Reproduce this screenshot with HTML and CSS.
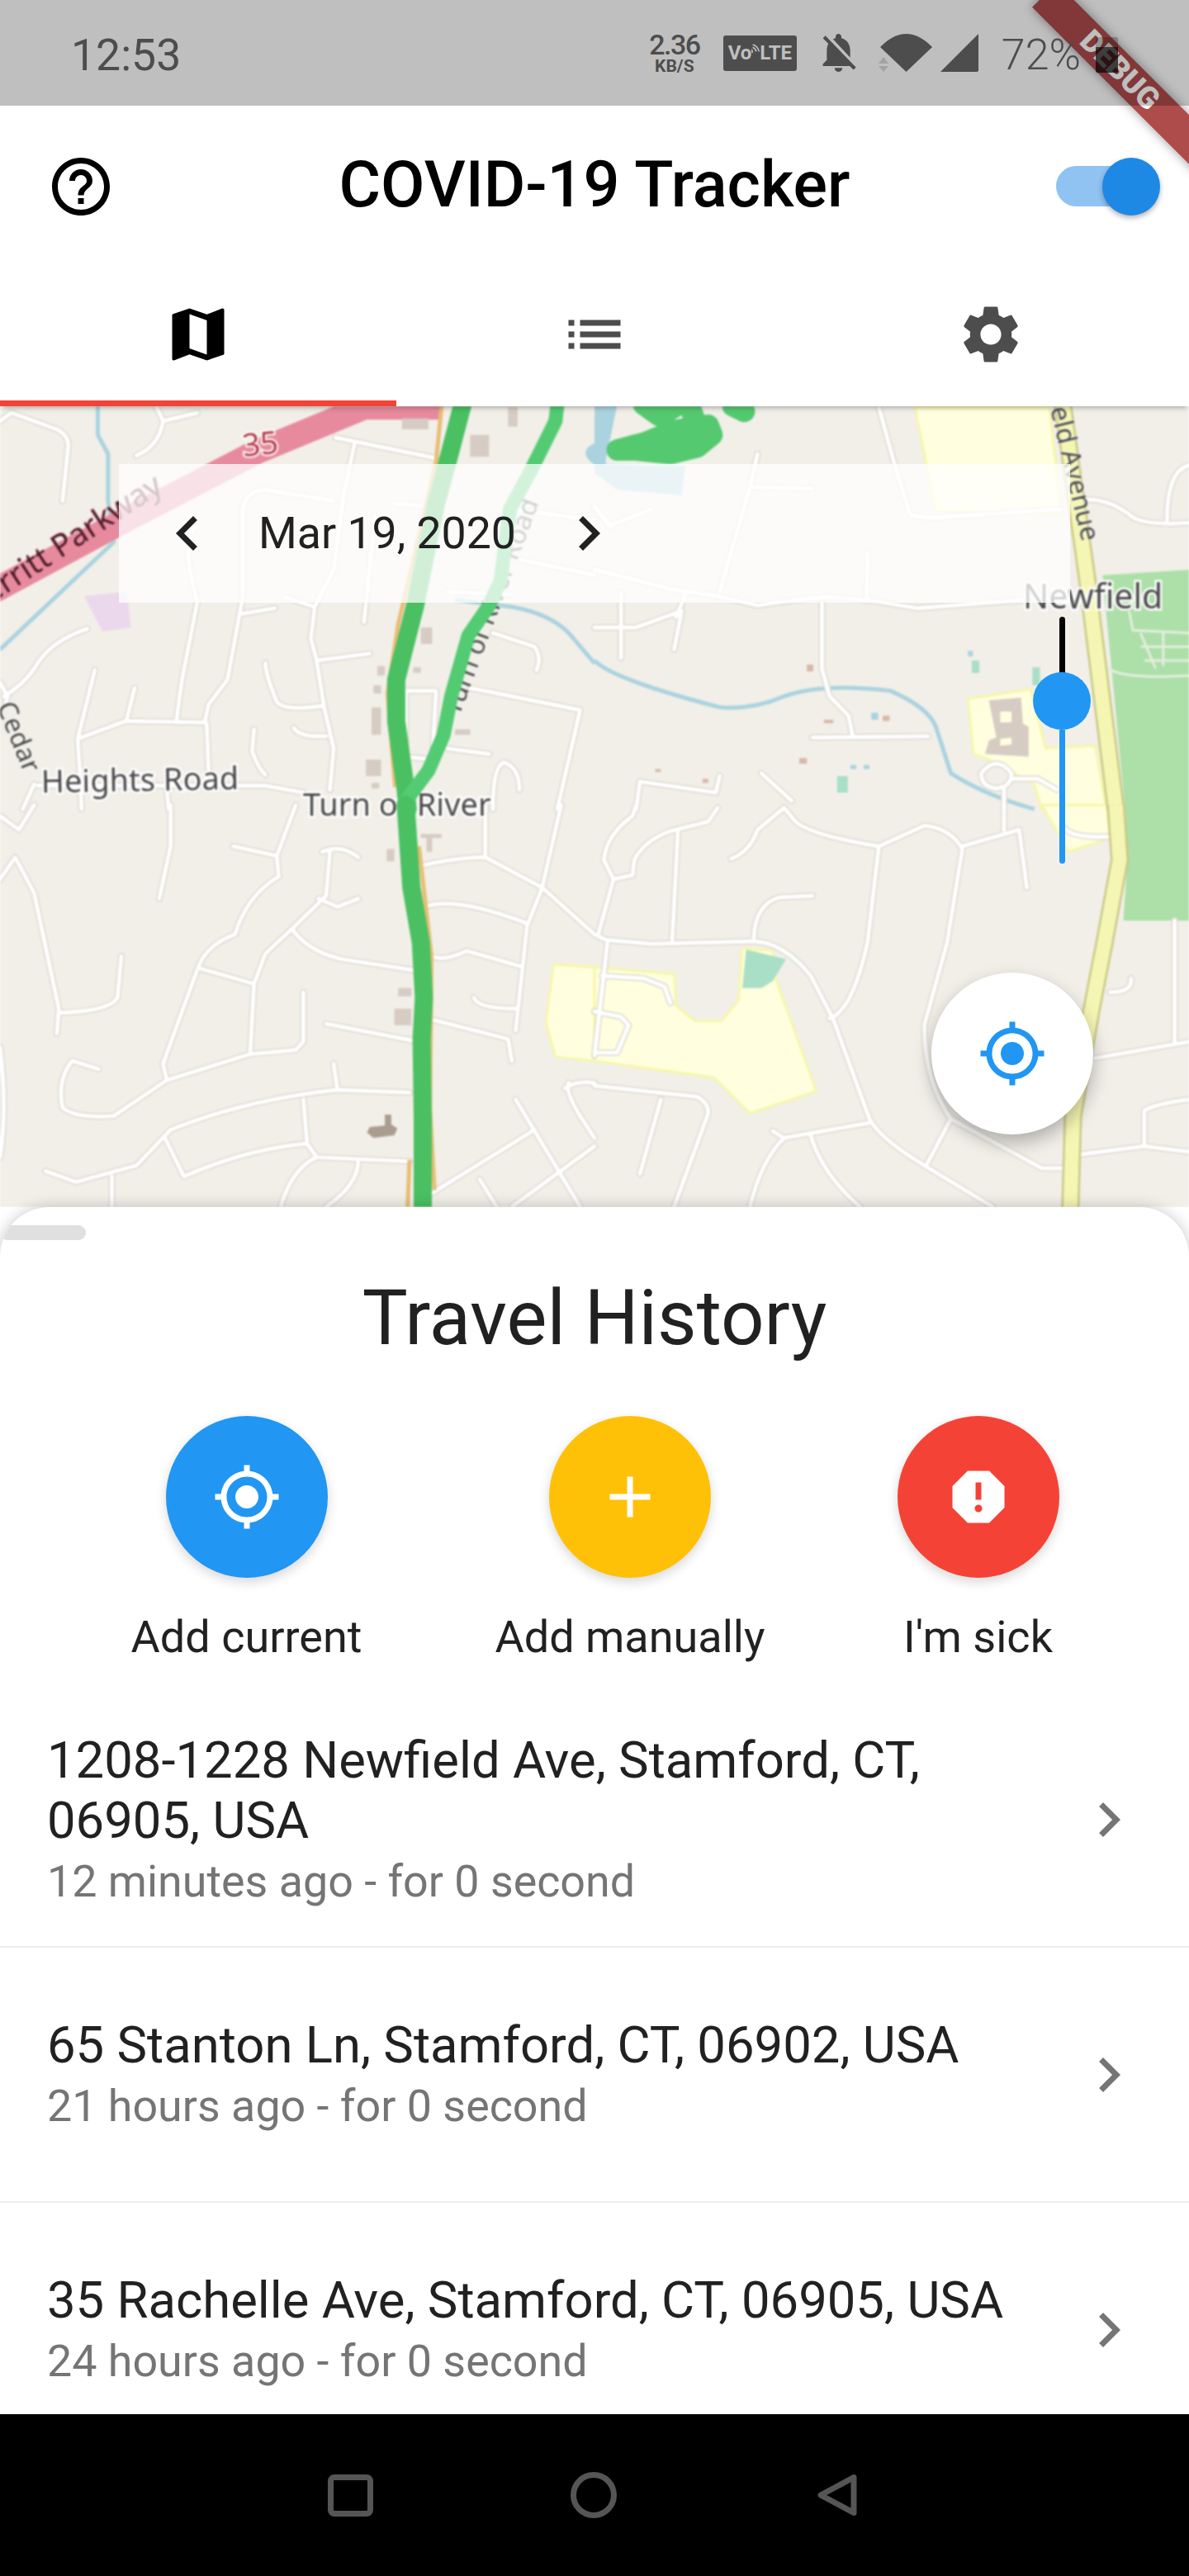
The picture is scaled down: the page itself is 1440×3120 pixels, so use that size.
FILE: index.html
```html
<!DOCTYPE html>
<html lang="en">
<head>
<meta charset="utf-8">
<title>COVID-19 Tracker</title>
<link rel="stylesheet" href="styles.css">
</head>
<body>
<div class="app">
  <div class="status">
    <span class="clock">12:53</span>
    <div class="status-right">
      <div class="speed"><span class="speed-num">2.36</span><span class="speed-unit">KB/S</span></div>
      <div class="volte">Vo<svg class="volte-arcs" viewBox="0 0 12 14" width="10" height="12"><path d="M1 13a5 5 0 0 0-1-5M2 5a9 9 0 0 1 5 6M2 1a13 13 0 0 1 9 10"/></svg>LTE</div>
      <svg class="bell" viewBox="3 2.5 18 19.5" width="47" height="46"><path d="M20 18.69L7.84 6.14 5.27 3.49 4 4.76l2.8 2.8v.01c-.52.99-.8 2.16-.8 3.42v5l-2 2v1h13.73l2 2L21 19.72l-1-1.03zM12 22c1.11 0 2-.89 2-2h-4c0 1.11.89 2 2 2zm6-7.32V11c0-3.08-1.64-5.64-4.5-6.32V4c0-.83-.67-1.5-1.5-1.5s-1.5.67-1.5 1.5v.68c-.15.03-.29.08-.42.12-.1.03-.2.07-.3.11h-.01c-.2.08-.4.17-.59.27-.01 0-.01 0-.02.01L18 14.68z"/></svg>
      <svg class="wifi" viewBox="-2 0 65 46" width="65" height="46"><path d="M31.500 46L0 16Q31.500-16 63 16Z"/><path class="wifi-data" d="M-2 36h12l-6-8zM-2 39h12l-6 7z"/></svg>
      <svg class="signal" viewBox="0 0 46 46" width="46" height="46"><path d="M46 0V44Q46 46 44 46H0Z"/></svg>
      <span class="battery-text">72%</span>
      <div class="battery"></div>
    </div>
  </div>
  <div class="banner"><span>DEBUG</span></div>

  <header class="appbar">
    <svg class="icon icon-black help-icon" viewBox="0 0 24 24"><path d="M11 18h2v-2h-2v2zm1-16C6.480 2 2 6.480 2 12s4.480 10 10 10 10-4.480 10-10S17.520 2 12 2zm0 18c-4.410 0-8-3.590-8-8s3.590-8 8-8 8 3.590 8 8-3.590 8-8 8zm0-14c-2.210 0-4 1.790-4 4h2c0-1.100.9-2 2-2s2 .9 2 2c0 2-3 1.750-3 5h2c0-2.250 3-2.500 3-5 0-2.210-1.790-4-4-4z"/></svg>
    <h1 class="app-title">COVID-19 Tracker</h1>
    <div class="switch"><div class="switch-track"></div><div class="switch-thumb"></div></div>
  </header>

  <nav class="tabs">
    <div class="tab tab-active"><svg class="icon icon-black" viewBox="0 0 24 24"><path d="M20.500 3l-.16.03L15 5.100 9 3 3.360 4.900c-.21.07-.36.25-.36.48V20.500c0 .28.22.5.5.5l.16-.03L9 18.900l6 2.100 5.640-1.900c.21-.07.36-.25.36-.48V3.500c0-.28-.22-.5-.5-.5zM15 19l-6-2.110V5l6 2.110V19z"/></svg></div>
    <div class="tab"><svg class="icon icon-grey" viewBox="0 0 24 24"><path d="M3 13h2v-2H3v2zm0 4h2v-2H3v2zm0-8h2V7H3v2zm4 4h14v-2H7v2zm0 4h14v-2H7v2zM7 7v2h14V7H7z"/></svg></div>
    <div class="tab"><svg class="icon icon-grey" viewBox="0 0 24 24"><path d="M19.140 12.940c.04-.3.06-.61.06-.94 0-.32-.02-.64-.07-.94l2.030-1.580c.18-.14.23-.41.12-.61l-1.920-3.320c-.12-.22-.37-.29-.59-.22l-2.390.96c-.5-.38-1.030-.7-1.620-.94l-.36-2.540c-.04-.24-.24-.41-.48-.41h-3.840c-.24 0-.43.17-.47.41l-.36 2.540c-.59.24-1.130.57-1.620.94l-2.390-.96c-.22-.08-.47 0-.59.22L2.740 8.870c-.12.21-.08.47.12.61l2.030 1.580c-.05.3-.09.63-.09.94s.02.64.07.94l-2.030 1.580c-.18.14-.23.41-.12.61l1.920 3.320c.12.22.37.29.59.22l2.390-.96c.5.38 1.030.7 1.620.94l.36 2.540c.05.24.24.41.48.41h3.840c.24 0 .44-.17.47-.41l.36-2.540c.59-.24 1.130-.56 1.620-.94l2.390.96c.22.08.47 0 .59-.22l1.920-3.320c.12-.22.07-.47-.12-.61l-2.010-1.580zM12 15.600c-1.980 0-3.600-1.620-3.600-3.600s1.620-3.600 3.600-3.600 3.600 1.620 3.600 3.600-1.620 3.600-3.600 3.600z"/></svg></div>
  </nav>

  <section class="map">
    <svg class="map-art" viewBox="0 492 1440 970" preserveAspectRatio="none">
      <defs>
        <g id="roads">
          <g transform="translate(0 490) scale(.4592 .3333)">
            <path d="M0 60L30 30L150 90Q180 110 180 150L165 350"/>
            <path d="M410 0L430 60L520 30M430 60Q420 150 360 185"/>
            <path d="M885 120L1150 195M935 140L905 340L880 600L830 735L820 850L835 930L855 1100L880 1250L870 1400"/>
            <path d="M640 380Q650 310 700 310L880 350M835 930L975 905"/>
            <path d="M520 440Q490 460 500 600L520 720L480 1000L465 1150"/>
            <path d="M640 380L640 700L620 850L600 1000L550 1090L540 1155M640 760L725 740"/>
            <path d="M205 1215L330 1150L540 1155M205 1215L250 965M205 1215L210 1320L215 1470M335 1140L355 1030M545 1155L550 1330"/>
            <path d="M700 940Q700 980 730 1080Q750 1115 850 1095M775 1175Q790 1210 860 1205M670 1180L665 1260Q680 1320 700 1345"/>
            <path d="M230 815Q130 860 90 960Q60 1020 10 1060M0 1010L20 1060L15 1090"/>
            <path d="M1240 1030L1530 1110L1470 1470M1070 1040L1150 1040L1140 1290L1070 1280ZM1180 1250L1290 1270"/>
            <path d="M1300 830L1410 880Q1430 920 1415 965M1300 1470Q1300 1310 1330 1300Q1370 1320 1370 1400"/>
            <path d="M1350 380L1568 420M1360 560L1568 620M1040 360L1140 370M990 400L960 790M1180 680L1350 690M750 700L830 735"/>
            <path d="M100 1385L630 1385L700 1385L800 1410"/>
            <path d="M90 1380L60 1470M440 1400L445 1470"/>
          </g>
          <g transform="translate(720 490) scale(.4592 .3333)">
            <path d="M750 10L790 210L830 390Q830 410 900 410L1230 380"/>
            <path d="M1290 345Q1360 340 1420 410Q1460 440 1568 430M1510 420Q1510 240 1568 220"/>
            <path d="M430 180L410 300L330 680M420 300L575 305"/>
            <path d="M0 600L200 670L320 695L430 730L530 710L610 700L720 710L850 740L1130 710M720 540L718 700"/>
            <path d="M600 720L600 960L620 1060L670 1130L680 1200M575 1210L880 1205"/>
            <path d="M0 810L110 810L230 750L210 890M70 680L70 920M240 690L215 770"/>
            <path d="M1020 1340Q1060 1270 1100 1340Q1100 1390 1060 1395Q1020 1390 1020 1340ZM1100 1360L1170 1360L1220 1400M1080 1395L1080 1470"/>
            <path d="M440 1340L520 1440M110 1470L120 1370L320 1410L330 1350"/>
            <path d="M0 370L40 440L150 380"/>
          </g>
          <g transform="translate(0 975) scale(.4592 .3333)">
            <path d="M0 40L50 90L90 0M0 270L40 190L90 320L155 740L150 830M155 755Q290 750 310 700L320 550"/>
            <path d="M450 0L450 150L420 340"/>
            <path d="M615 150L730 185L735 260Q650 330 620 470Q540 510 520 600L430 940L440 1000L300 1130Q200 1140 165 1100Q150 1000 190 930L260 960"/>
            <path d="M530 595L670 650M770 450L700 540L670 650L660 900M780 0L730 185"/>
            <path d="M870 170L860 330L770 450M850 170Q900 140 945 190M840 340L890 370L945 340"/>
            <path d="M770 450Q810 530 900 560L1090 600M800 680L800 860L780 890L660 905L440 1000"/>
            <path d="M860 795L1085 855M880 940L890 1035L1080 1045M890 1035Q650 1070 450 1180L360 1310L200 1370L120 1330"/>
            <path d="M800 1070L810 1230L835 1280L1080 1295M810 1230Q650 1250 485 1350L435 1210"/>
            <path d="M835 1280Q770 1320 740 1460M945 1290Q945 1380 860 1460M295 1350V1460"/>
            <path d="M1100 225Q1200 190 1280 190L1430 300L1568 470M1280 0V190M1480 0L1430 300L1390 440L1360 820"/>
            <path d="M1120 370Q1200 330 1390 430M1140 550Q1170 570 1230 530L1370 585"/>
            <path d="M1250 700Q1260 740 1360 740M1140 780L1340 850L1350 930"/>
            <path d="M1140 1410L1410 1180M1360 1070L1530 1460M1568 1240L1350 1460M1265 1360L1310 1460"/>
            <path d="M1500 1010Q1490 1040 1530 1130L1568 1210M1490 1030Q1520 1000 1568 1010M0 880Q20 1100 0 1280"/>
          </g>
          <g transform="translate(720 975) scale(.4592 .3333)">
            <path d="M110 0L100 40Q30 110 25 200L50 270L100 255L105 200Q130 130 200 95L300 60L325 10"/>
            <path d="M220 95L205 490M50 270L10 470"/>
            <path d="M0 470L30 490L150 505L420 495Q500 500 570 620L630 780L725 1140Q750 1210 870 1310L1050 1460"/>
            <path d="M420 495Q420 360 490 335L575 330"/>
            <path d="M500 10L530 60Q570 110 750 150L870 75Q940 85 970 160L930 500L870 800Q870 1000 940 1140L1180 1320L1240 1320"/>
            <path d="M750 150L720 500Q680 750 620 775M360 195Q410 170 430 90L500 10"/>
            <path d="M970 150L1120 90L1140 300M1080 0V90M940 1140L875 1310"/>
            <path d="M725 1155L500 1210L470 1185M500 1210Q440 1290 410 1460M570 1200Q600 1340 700 1460"/>
            <path d="M0 1020L270 1060Q300 1080 300 1120L210 1460M175 1070L120 1340"/>
            <path d="M0 750L70 770L90 800L60 900L0 900M35 490L0 910M20 620L130 630L185 660L200 720"/>
            <path d="M1240 85Q1260 120 1360 115"/>
            <path d="M1320 920L1568 860"/>
            <path d="M1530 420L1530 870M1280 1270L1450 1240L1568 1260M1450 1240L1450 1110Q1480 1085 1568 1070M1360 680Q1420 680 1415 630"/>
          </g>
        </g>
      </defs>

      <rect class="land" x="0" y="492" width="1440" height="970"/>

      <g transform="translate(0 490) scale(.4592 .3333)">
        <path class="pink-area" d="M222 695L335 680L345 810L270 825Z"/>
        <path class="water" d="M258 0L258 110L285 180L285 350L300 500L0 890M1200 710L1350 735Q1450 760 1500 830L1568 940"/>
        <path class="water-fill" d="M1568 140Q1520 170 1568 220Z"/>
        <path class="motorway" d="M-20 680L330 420L680 170L960 10L1160 10"/>
      </g>
      <g transform="translate(720 490) scale(.4592 .3333)">
        <path class="water-fill" d="M0 0L60 0L30 200L30 218L240 222L230 330L60 310L0 250Z"/>
        <path class="water" d="M0 930Q50 1000 330 1100Q420 1110 500 1060Q600 1010 780 1040Q880 1100 900 1170L940 1340Q1030 1420 1160 1470"/>
        <path class="yellow-area" d="M845 10L1200 10L1230 400L900 385Z"/>
        <path class="yellow-area" d="M985 1070L1150 1035L1190 1250L1320 1240L1350 1470L1180 1470L1160 1380L1040 1290L1000 1270Z"/>
        <path class="park" d="M1340 620L1568 600L1568 1480L1400 1480Z"/>
      </g>
      <g transform="translate(0 975) scale(.4592 .3333)">
        <path class="yellow-area" d="M1460 580L1568 590L1568 930L1465 915L1440 790Z"/>
      </g>
      <g transform="translate(720 975) scale(.4592 .3333)">
        <path class="yellow-area" d="M1180 0L1350 0L1360 120L1250 170Z"/>
        <path class="park" d="M1400 0L1568 0L1568 420L1395 420L1405 200Z"/>
        <path class="yellow-area" d="M0 590L210 615L215 730L265 785L335 785L380 710L390 520L470 530L480 640L585 1040L410 1120L315 990L0 930Z"/>
        <path class="teal-area" d="M400 525L505 560L470 640L440 665L390 665Z"/>
      </g>

      <use href="#roads" class="road-casing"/>
      <use href="#roads" class="road-fill"/>

      <g transform="translate(720 490) scale(.4592 .3333)">
        <path class="park-path" d="M1345 950Q1380 1000 1568 985M1410 750L1420 820L1568 830M1440 830L1480 960M1500 830V950M1440 880L1568 880M1450 930L1568 930"/>
        <path class="newfield-casing" d="M1235 0L1300 640L1375 1470"/>
        <path class="newfield-fill" d="M1235 0L1300 640L1375 1470"/>
      </g>
      <g transform="translate(720 975) scale(.4592 .3333)">
        <path class="newfield-casing" d="M1375 0L1385 200L1345 500L1310 750L1262 1130L1255 1470"/>
        <path class="newfield-fill" d="M1375 0L1385 200L1345 500L1310 750L1262 1130L1255 1470"/>
      </g>

      <g class="building" transform="translate(0 490) scale(.4592 .3333)">
        <path d="M1060 50H1130V90H1060ZM1240 110H1290V190H1240ZM1340 10H1365V80H1340ZM1110 810H1140V870H1110ZM995 950H1015V985H995ZM985 1020H1005V1050H985ZM980 1100H1005V1200H980ZM965 1290H1005V1350H965ZM980 1375H1000V1395H980ZM1090 955H1110V975H1090ZM1200 1180H1240V1200H1200Z"/>
      </g>
      <g class="building" transform="translate(0 975) scale(.4592 .3333)">
        <path d="M1110 105H1165V120H1140V170H1125V120H1110ZM1020 160H1040V205H1020ZM1050 665H1085V695H1050ZM1040 740H1085V800H1040Z"/>
      </g>
      <path class="building-dark" transform="translate(0 975) scale(.4592 .3333)" d="M1015 1125H1032V1160L1048 1175L1040 1200L985 1210L968 1190L975 1170L1015 1165Z"/>
      <g transform="translate(720 490) scale(.4592 .3333)">
        <path class="building" fill-rule="evenodd" d="M1040 1075L1125 1065L1130 1160L1145 1170L1145 1280L1030 1270L1040 1220L1060 1210ZM1070 1115H1100V1155H1070ZM1070 1215L1100 1210V1235L1070 1240Z"/>
        <path class="teal-area" d="M995 930H1015V975H995ZM1155 955H1175V1020H1155ZM640 1350H668V1410H640Z"/>
        <path class="water-fill" d="M985 895H998V915H985ZM730 1120H748V1145H730ZM675 1310H690V1325H675ZM710 1310H725V1325H710Z"/>
        <path class="building-small" d="M560 945H577V970H560ZM605 1145H630V1158H605ZM760 1130H778V1150H760ZM540 1285H560V1305H540ZM160 1325H175V1335H160ZM285 1360H300V1375H285Z"/>
      </g>

      <text class="label label-hw" transform="translate(-40 750) rotate(-33)">Merritt Parkway</text>
      <text class="label label-shield" transform="translate(295 553) rotate(-6)">35</text>
      <text class="label" transform="translate(50 960) rotate(-1)">Heights Road</text>
      <text class="label" x="367" y="988">Turn of River</text>
      <text class="label label-small" transform="translate(-4 855) rotate(68)">Cedar</text>
      <text class="label label-small" transform="translate(556 868) rotate(-69.500)">Turn of River Road</text>
      <text class="label label-small" transform="translate(1252 411) rotate(76.600)">Newfield Avenue</text>
      <text class="label label-place" x="1239" y="737">Newfield</text>

      <g transform="translate(0 490) scale(.4592 .3333)">
        <path class="road-orange" d="M1165 0L1150 210L1050 800L1022 1050L1042 1390"/>
        <path class="track" d="M1220 0L1180 210L1150 360L1095 730L1045 1000L1045 1150L1070 1400L1075 1470"/>
        <path class="track track-thin" d="M1470 0L1465 60L1400 240L1345 380L1320 640L1290 730L1235 840L1190 1060L1170 1200L1130 1330L1065 1450"/>
      </g>
      <g transform="translate(0 975) scale(.4592 .3333)">
        <path class="road-orange" d="M1105 150L1138 550L1134 1100L1146 1400M1080 1290L1075 1460"/>
        <path class="track" d="M1070 0L1085 300L1110 500L1118 700L1112 850L1115 1150L1115 1460"/>
      </g>
      <g transform="translate(720 490) scale(.4592 .3333)">
        <path class="track track-loop" d="M60 165L130 140L210 95L300 75L310 110L270 155L200 178L110 165ZM130 0L170 40L210 10M250 0L265 60M365 5L395 25"/>
      </g>
    </svg>

    <div class="date-panel">
      <svg class="icon icon-dark" viewBox="0 0 24 24"><path d="M15.410 7.410L14 6l-6 6 6 6 1.410-1.410L10.830 12z"/></svg>
      <span class="date-text">Mar 19, 2020</span>
      <svg class="icon icon-dark" viewBox="0 0 24 24"><path d="M10 6L8.590 7.410 13.170 12l-4.580 4.590L10 18l6-6z"/></svg>
    </div>

    <div class="slider">
      <div class="slider-top"></div>
      <div class="slider-thumb"></div>
      <div class="slider-bottom"></div>
    </div>

    <div class="fab">
      <svg class="icon icon-blue" viewBox="0 0 24 24"><path d="M12 8c-2.210 0-4 1.790-4 4s1.790 4 4 4 4-1.790 4-4-1.790-4-4-4zm8.940 3c-.46-4.170-3.770-7.480-7.940-7.940V1h-2v2.060C6.830 3.520 3.520 6.830 3.060 11H1v2h2.060c.46 4.170 3.770 7.480 7.940 7.940V23h2v-2.060c4.170-.46 7.480-3.770 7.940-7.940H23v-2h-2.060zM12 19c-3.870 0-7-3.130-7-7s3.130-7 7-7 7 3.130 7 7-3.130 7-7 7z"/></svg>
    </div>
  </section>

  <section class="sheet">
    <div class="handle"></div>
    <h2 class="sheet-title">Travel History</h2>
    <div class="actions">
      <div class="action action-current">
        <div class="action-circle circle-blue"><svg class="icon icon-white" viewBox="0 0 24 24"><path d="M12 8c-2.210 0-4 1.790-4 4s1.790 4 4 4 4-1.790 4-4-1.790-4-4-4zm8.940 3c-.46-4.170-3.770-7.480-7.940-7.940V1h-2v2.060C6.830 3.520 3.520 6.830 3.060 11H1v2h2.060c.46 4.170 3.770 7.480 7.940 7.940V23h2v-2.060c4.170-.46 7.480-3.770 7.940-7.940H23v-2h-2.060zM12 19c-3.870 0-7-3.130-7-7s3.130-7 7-7 7 3.130 7 7-3.130 7-7 7z"/></svg></div>
        <span class="action-label">Add current</span>
      </div>
      <div class="action action-manual">
        <div class="action-circle circle-amber"><svg class="icon icon-white" viewBox="0 0 24 24"><path d="M19 13h-6v6h-2v-6H5v-2h6V5h2v6h6v2z"/></svg></div>
        <span class="action-label">Add manually</span>
      </div>
      <div class="action action-sick">
        <div class="action-circle circle-red"><svg class="icon icon-white" viewBox="0 0 24 24"><path d="M15.730 3H8.270L3 8.270v7.460L8.270 21h7.460L21 15.730V8.270L15.730 3zM12 17.300c-.72 0-1.300-.58-1.300-1.300 0-.72.58-1.300 1.300-1.300.72 0 1.300.58 1.300 1.300 0 .72-.58 1.300-1.300 1.300zm1-4.300h-2V7h2v6z"/></svg></div>
        <span class="action-label">I'm sick</span>
      </div>
    </div>
    <ul class="history">
      <li class="history-row">
        <div class="history-text">
          <div class="history-title">1208-1228 Newfield Ave, Stamford, CT, 06905, USA</div>
          <div class="history-sub">12 minutes ago - for 0 second</div>
        </div>
        <svg class="icon icon-mid" viewBox="0 0 24 24"><path d="M10 6L8.590 7.410 13.170 12l-4.580 4.590L10 18l6-6z"/></svg>
      </li>
      <li class="history-row">
        <div class="history-text">
          <div class="history-title">65 Stanton Ln, Stamford, CT, 06902, USA</div>
          <div class="history-sub">21 hours ago - for 0 second</div>
        </div>
        <svg class="icon icon-mid" viewBox="0 0 24 24"><path d="M10 6L8.590 7.410 13.170 12l-4.580 4.590L10 18l6-6z"/></svg>
      </li>
      <li class="history-row">
        <div class="history-text">
          <div class="history-title">35 Rachelle Ave, Stamford, CT, 06905, USA</div>
          <div class="history-sub">24 hours ago - for 0 second</div>
        </div>
        <svg class="icon icon-mid" viewBox="0 0 24 24"><path d="M10 6L8.590 7.410 13.170 12l-4.580 4.590L10 18l6-6z"/></svg>
      </li>
    </ul>
  </section>

  <footer class="navbar">
    <div class="nav-square"></div>
    <div class="nav-circle"></div>
    <svg class="nav-back" viewBox="0 0 50 50" width="50" height="50"><path d="M44 3.500V46.500L4 25Z"/></svg>
  </footer>
</div>
</body>
</html>
```
FILE: styles.css
```css
* { box-sizing: border-box; }
html, body { margin: 0; padding: 0; background: #fff; }
body { font-family: Roboto, "Noto Sans", sans-serif; color: #212121; }
.app {
  position: relative;
  width: 1440px;
  height: 3120px;
  overflow: hidden;
  display: flex;
  flex-direction: column;
  background: #fff;
}

/* status bar: a dim layer that lies over the banner */
.status {
  position: relative;
  z-index: 6;
  flex: 0 0 128px;
  display: flex;
  align-items: center;
  padding-left: 86px;
  background: rgba(0, 0, 0, .25);
  color: #4d4d4d;
}
.clock { font-size: 53.500px; line-height: 60px; margin-top: 6px; }
.status-right { margin-left: auto; margin-right: 131px; display: flex; align-items: center; }
.speed { display: flex; flex-direction: column; align-items: center; width: 62px; }
.speed-num { font-size: 34px; line-height: 32px; font-weight: 500; letter-spacing: -1.500px; }
.speed-unit { font-size: 21px; line-height: 20px; font-weight: 700; }
.volte {
  margin-left: 28px;
  width: 89px;
  height: 43px;
  border-radius: 3px;
  background: #4d4d4d;
  color: #bfbfbf;
  font-size: 24px;
  font-weight: 700;
  display: flex;
  align-items: center;
  justify-content: center;
}
.volte-arcs { margin-top: -10px; }
.volte-arcs path { fill: none; stroke: #bfbfbf; stroke-width: 2; }
.bell { margin-left: 27px; fill: #4d4d4d; }
.wifi { margin-left: 25px; fill: #4d4d4d; }
.wifi .wifi-data { fill: #a3a3a3; }
.signal { margin-left: 10px; fill: #4d4d4d; }
.battery-text { margin-left: 28px; font-size: 52px; line-height: 60px; font-weight: 300; margin-top: 6px; }
.battery {
  position: absolute;
  left: 1327px;
  top: 45px;
  width: 27px;
  height: 43px;
  background: linear-gradient(rgba(0, 0, 0, .22) 0 12px, rgba(0, 0, 0, .68) 12px);
  border-radius: 2px;
}

/* debug ribbon across the corner */
.banner {
  position: absolute;
  z-index: 5;
  left: 1221px;
  top: 79px;
  width: 300px;
  height: 42px;
  transform: rotate(45deg);
  background: #ae4b4b;
  box-shadow: 0 0 14px rgba(0, 0, 0, .4);
  color: #fff;
  font-size: 37px;
  font-weight: 900;
  line-height: 42px;
  text-align: center;
  padding-right: 42px;
}

/* app bar */
.appbar {
  flex: 0 0 196px;
  padding: 0 35px;
  display: grid;
  grid-template-columns: 1fr auto 1fr;
  align-items: center;
  background: #fff;
}
.help-icon { margin-left: 21px; }
.icon { display: block; width: 84px; height: 84px; flex: none; }
.icon-black { fill: #000; }
.icon-grey { fill: #4d4d4d; }
.icon-dark { fill: #212121; }
.icon-blue { fill: #2196f3; }
.icon-white { fill: #fff; }
.icon-mid { fill: #757575; }
.app-title { margin: 0 0 4px; font-size: 77.500px; line-height: 84px; font-weight: 500; color: #000; }
.switch { position: relative; justify-self: end; width: 126px; height: 70px; }
.switch-track { position: absolute; left: 0; top: 10px; width: 119px; height: 49px; border-radius: 25px; background: #90c3f2; }
.switch-thumb { position: absolute; right: 0; top: 0; width: 70px; height: 70px; border-radius: 50%; background: #1e88e5; box-shadow: 0 3px 6px rgba(0, 0, 0, .3); }

/* tabs */
.tabs {
  position: relative;
  z-index: 2;
  flex: 0 0 168px;
  display: grid;
  grid-template-columns: repeat(3, 1fr);
  background: #fff;
  box-shadow: 0 5px 6px -3px rgba(0, 0, 0, .3);
}
.tab { display: flex; align-items: center; justify-content: center; padding-bottom: 6px; }
.tab-active { border-bottom: 7px solid #f44336; padding-bottom: 0; }

/* map */
.map { position: relative; z-index: 0; flex: 0 0 970px; overflow: hidden; }
.map-art { position: absolute; left: 0; top: 0; width: 1440px; height: 970px; filter: blur(1px); }
.land { fill: #f2efe9; }
.pink-area { fill: #ecd8ec; }
.water { fill: none; stroke: #aad3df; stroke-width: 5; }
.water-fill { fill: #aad3df; }
.yellow-area { fill: #ffffe0; stroke: #f7f7a8; stroke-width: 3; vector-effect: non-scaling-stroke; }
.park { fill: #addfa8; }
.teal-area { fill: #a8dfc6; }
.building { fill: #d6ccc3; }
.building-dark { fill: #ab9c90; }
.building-small { fill: #d9b8a8; }
.motorway { fill: none; stroke: #e88a9e; stroke-width: 30; vector-effect: non-scaling-stroke; }
.water, .track, .road-orange, .newfield-casing, .newfield-fill, .park-path { vector-effect: non-scaling-stroke; }
#roads path { fill: none; vector-effect: non-scaling-stroke; stroke-linejoin: round; stroke-linecap: round; }
.road-casing { stroke: #dcd8d0; stroke-width: 8; }
.road-fill { stroke: #fff; stroke-width: 5; }
.park-path { fill: none; stroke: #e4efdf; stroke-width: 3; }
.newfield-casing { fill: none; stroke: #c8c884; stroke-width: 22; }
.newfield-fill { fill: none; stroke: #f6f6b4; stroke-width: 17; }
.road-orange { fill: none; stroke: #e9bd74; stroke-width: 5; }
.track { fill: none; stroke: #4ac062; stroke-width: 22; stroke-linejoin: round; stroke-linecap: round; }
.track-thin { stroke-width: 17; stroke: #52cb72; }
.track-loop { stroke-width: 26; stroke: #54c96f; }
.label {
  font-family: "Noto Sans", sans-serif;
  font-size: 38px;
  fill: #484848;
  stroke: #fff;
  stroke-width: 5px;
  paint-order: stroke;
}
.label-small { font-size: 32px; stroke-width: 2px; stroke: rgba(255, 255, 255, .6); }
.label-place { font-size: 41px; }
.label-hw { font-size: 38px; fill: #4a1a28; stroke: rgba(232, 146, 162, .5); stroke-width: 2px; }
.label-shield { font-size: 38px; fill: #b43a48; stroke-width: 4px; }

/* floating controls on the map */
.date-panel {
  position: absolute;
  left: 144px;
  top: 70px;
  width: 1152px;
  height: 168px;
  padding-left: 41px;
  display: flex;
  align-items: center;
  background: rgba(255, 255, 255, .75);
}
.date-text { margin-left: 44px; margin-right: 46px; font-size: 53.600px; line-height: 64px; color: #212121; }
.slider { position: absolute; left: 1251px; top: 255px; width: 70px; display: flex; flex-direction: column; align-items: center; }
.slider-top { width: 7px; height: 70px; background: #000; border-radius: 4px 4px 0 0; }
.slider-thumb { width: 70px; height: 70px; border-radius: 50%; background: #2196f3; margin-top: -3px; }
.slider-bottom { width: 7px; height: 162px; background: #2196f3; border-radius: 0 0 4px 4px; }
.fab {
  position: absolute;
  left: 1128px;
  top: 686px;
  width: 196px;
  height: 196px;
  border-radius: 50%;
  background: #fff;
  display: flex;
  align-items: center;
  justify-content: center;
  box-shadow: 0 10px 22px rgba(0, 0, 0, .28);
}

/* bottom sheet */
.sheet {
  position: relative;
  z-index: 1;
  flex: 0 0 1462px;
  min-height: 0;
  overflow: hidden;
  background: #fff;
  border-radius: 60px 60px 0 0;
  box-shadow: 0 0 18px rgba(0, 0, 0, .22);
}
.handle { position: absolute; left: 0; top: 22px; width: 104px; height: 18px; border-radius: 9px; background: #e0e0e0; }
.sheet-title { margin: 0; padding-top: 85px; text-align: center; font-size: 92.300px; line-height: 100px; font-weight: 400; color: #212121; }
.actions { display: flex; margin-top: 68px; padding-left: 160px; }
.action { display: flex; flex-direction: column; align-items: center; }
.action-current { width: 277px; }
.action-manual { width: 324px; margin-left: 164px; }
.action-sick { width: 179px; margin-left: 170px; }
.action-circle {
  width: 196px;
  height: 196px;
  border-radius: 50%;
  display: flex;
  align-items: center;
  justify-content: center;
  box-shadow: 0 5px 14px rgba(0, 0, 0, .16);
}
.circle-blue { background: #2196f3; }
.circle-amber { background: #ffc107; }
.circle-red { background: #f44336; }
.action-label { margin-top: 42px; font-size: 54px; line-height: 60px; white-space: nowrap; color: #212121; }
.history { list-style: none; margin: 37px 0 0; padding: 0; }
.history-row {
  height: 309px;
  padding: 0 55px 0 57px;
  display: flex;
  align-items: center;
  justify-content: space-between;
  border-bottom: 2px solid #eee;
}
.history-text { width: 1180px; }
.history-title { margin-top: 3px; font-size: 61.600px; line-height: 73px; color: #212121; }
.history-sub { font-size: 53.800px; line-height: 73px; color: #757575; }

/* system navigation */
.navbar {
  position: relative;
  z-index: 2;
  flex: 0 0 196px;
  background: #000;
  display: flex;
  align-items: center;
  padding-left: 397px;
}
.nav-square { width: 55px; height: 51px; border: 7px solid #555; border-radius: 8px; }
.nav-circle { width: 56px; height: 56px; margin-left: 239px; border: 7px solid #555; border-radius: 50%; }
.nav-back { margin-left: 243px; fill: none; stroke: #555; stroke-width: 7; stroke-linejoin: round; }
```
